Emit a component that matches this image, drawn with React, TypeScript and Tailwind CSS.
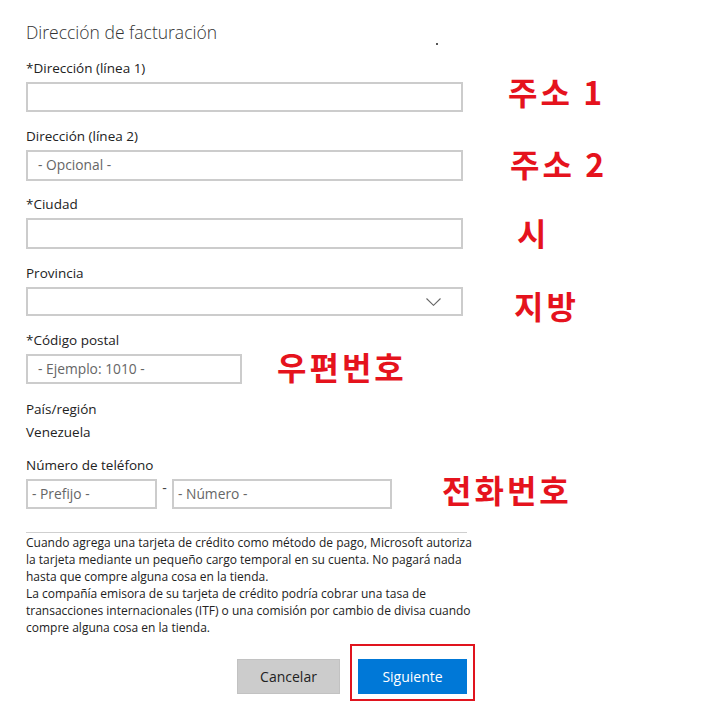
import React from "react";

const font = { fontFamily: '"Open Sans", "Noto Sans", sans-serif' };

function Label({ children, className = "" }: { children: React.ReactNode; className?: string }) {
  return <div className={`text-[13.5px] leading-[20px] text-[#222] ${className}`}>{children}</div>;
}

function Field({ placeholder, className = "" }: { placeholder?: string; className?: string }) {
  return (
    <div className={`shrink-0 h-[30px] border-2 border-[#cccccc] bg-white flex items-center text-[13.8px] text-[#666] ${className}`}>
      {placeholder}
    </div>
  );
}

function Note({ children, className = "" }: { children: React.ReactNode; className?: string }) {
  return (
    <div
      className={`absolute text-[32px] leading-[36px] font-bold tracking-[3px] text-[#e5131d] whitespace-nowrap ${className}`}
      style={{ fontFamily: '"Noto Sans CJK KR", "Noto Sans", sans-serif' }}
    >
      {children}
    </div>
  );
}

export default function App() {
  return (
    <div className="relative w-[720px] h-[709px] bg-white overflow-hidden" style={font}>
      <div className="pl-[26px] pt-[20px] w-[520px] flex flex-col">
        <div className="text-[17.5px] leading-[24px] font-light text-[#333]">Dirección de facturación</div>

        <Label className="mt-[14px]">*Dirección (línea 1)</Label>
        <Field className="mt-[4px] w-[437px]" />

        <Label className="mt-[14px]">Dirección (línea 2)</Label>
        <Field className="mt-[4px] w-[437px] h-[31px] pl-[10px]" placeholder="- Opcional -" />

        <Label className="mt-[13px]">*Ciudad</Label>
        <Field className="mt-[4px] w-[437px] h-[31px]" />

        <Label className="mt-[14px]">Provincia</Label>
        <div className="mt-[4px] w-[437px] h-[29px] border-2 border-[#cccccc] flex items-center justify-end pr-[20px]">
          <svg width="15" height="8" viewBox="0 0 15 8" fill="none">
            <path d="M0.5 0.5 L7.5 7.3 L14.5 0.5" stroke="#666" strokeWidth="1.1" />
          </svg>
        </div>

        <Label className="mt-[14px]">*Código postal</Label>
        <Field className="mt-[4px] w-[216px] pl-[10px]" placeholder="- Ejemplo: 1010 -" />

        <Label className="mt-[15px]">País/región</Label>
        <Label className="mt-[3px]">Venezuela</Label>

        <Label className="mt-[13px]">Número de teléfono</Label>
        <div className="mt-[4px] flex items-start">
          <Field className="w-[131px] pl-[4px]" placeholder="- Prefijo -" />
          <div className="w-[15px] text-center text-[14px] leading-[18px] text-[#444]">-</div>
          <Field className="w-[220px] pl-[4px]" placeholder="- Número -" />
        </div>

        <div className="mt-[23px] w-[441px] border-t border-[#cfcfcf]" />
        <div className="mt-[1px] text-[12px] leading-[17px] text-[#222] whitespace-nowrap">
          Cuando agrega una tarjeta de crédito como método de pago, Microsoft autoriza
          <br />
          la tarjeta mediante un pequeño cargo temporal en su cuenta. No pagará nada
          <br />
          hasta que compre alguna cosa en la tienda.
          <br />
          La compañía emisora de su tarjeta de crédito podría cobrar una tasa de
          <br />
          transacciones internacionales (ITF) o una comisión por cambio de divisa cuando
          <br />
          compre alguna cosa en la tienda.
        </div>

        <div className="mt-[8px] ml-[211px] flex items-end">
          <button className="shrink-0 w-[103px] h-[35px] bg-[#cccccc] border border-[#c2c2c2] text-[14px] text-[#222] mb-[7px]">
            Cancelar
          </button>
          <div className="shrink-0 ml-[10px] border-2 border-[#e0141e] pt-[13px] pb-[5px] px-[6px]">
            <button className="w-[109px] h-[35px] bg-[#0078d7] text-[14px] text-white">Siguiente</button>
          </div>
        </div>
      </div>

      <div className="absolute left-[436px] top-[43px] w-[2px] h-[2px] bg-[#555]" />

      <Note className="left-[508px] top-[73px]">주소 1</Note>
      <Note className="left-[510px] top-[145px]">주소 2</Note>
      <Note className="left-[517px] top-[214px]">시</Note>
      <Note className="left-[514px] top-[287px]">지방</Note>
      <Note className="left-[277px] top-[348px]">우편번호</Note>
      <Note className="left-[442px] top-[471px]">전화번호</Note>
    </div>
  );
}
